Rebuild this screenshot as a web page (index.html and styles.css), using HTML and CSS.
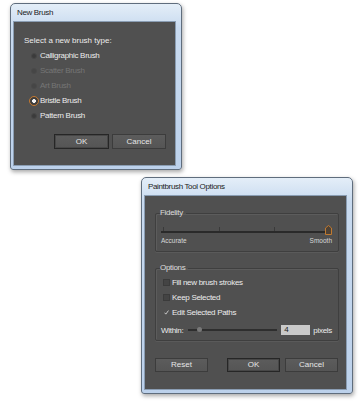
FILE: index.html
```html
<!DOCTYPE html>
<html>
<head>
<meta charset="utf-8">
<link rel="stylesheet" href="styles.css">
</head>
<body>
<div class="page">
  <div class="win win-brush">
    <div class="titlebar">New Brush</div>
    <div class="panel panel-brush">
      <div class="prompt">Select a new brush type:</div>
      <div class="radios">
        <div class="radio"><span class="dot"></span>Calligraphic Brush</div>
        <div class="radio disabled"><span class="dot"></span>Scatter Brush</div>
        <div class="radio disabled"><span class="dot"></span>Art Brush</div>
        <div class="radio"><span class="dot on"></span>Bristle Brush</div>
        <div class="radio"><span class="dot"></span>Pattern Brush</div>
      </div>
      <div class="btnrow">
        <div class="btn default w55">OK</div>
        <div class="btn w54">Cancel</div>
      </div>
    </div>
  </div>

  <div class="win win-opts">
    <div class="titlebar">Paintbrush Tool Options</div>
    <div class="panel panel-opts">
      <fieldset class="group fid">
        <legend>Fidelity</legend>
        <div class="fslider">
          <span class="tick t1"></span>
          <span class="tick t2"></span>
          <span class="tick t3"></span>
          <svg class="fthumb" width="7" height="10" viewBox="0 0 7 10"><path d="M0.5 9.5 V3 L3.5 0.5 L6.5 3 V9.5 Z" fill="#4e4236" stroke="#c07a30" stroke-width="1"/></svg>
        </div>
        <div class="flabels"><span>Accurate</span><span>Smooth</span></div>
      </fieldset>
      <fieldset class="group opts">
        <legend>Options</legend>
        <div class="check"><span class="box"></span>Fill new brush strokes</div>
        <div class="check"><span class="box"></span>Keep Selected</div>
        <div class="check"><span class="box checked"><svg width="7" height="7" viewBox="0 0 7 7"><path d="M0.8 3.8 L2.6 5.8 L6.2 0.8" fill="none" stroke="#e6e6e6" stroke-width="1.1"/></svg></span>Edit Selected Paths</div>
        <div class="within">
          <span class="wlabel">Within:</span>
          <div class="wslider"><span class="wthumb"></span></div>
          <div class="input">4</div>
          <span>pixels</span>
        </div>
      </fieldset>
      <div class="btnrow2">
        <div class="btn w53">Reset</div>
        <div class="right">
          <div class="btn default w53">OK</div>
          <div class="btn w53">Cancel</div>
        </div>
      </div>
    </div>
  </div>
</div>
</body>
</html>
```
FILE: styles.css
```css
* { box-sizing: border-box; }
html, body { margin: 0; padding: 0; background: #ffffff; }
body { width: 360px; height: 402px; overflow: hidden; font-family: "Liberation Sans", Arial, sans-serif; }
.page { display: flex; flex-direction: column; align-items: flex-start; }

.win {
  background: linear-gradient(#e4eef8, #c8daef 24px, #bcd1eb);
  border: 1px solid #5f6d7d;
  border-radius: 5px 5px 3px 3px;
  padding: 0 5px 4px 2px;
  box-shadow: 1px 2px 4px rgba(0,0,0,0.35);
}
.win-brush { margin: 3px 0 0 10px; width: 172px; height: 167px; }
.win-opts { margin: 7px 0 0 141px; width: 212px; height: 217px; }

.titlebar {
  height: 17px;
  line-height: 17px;
  font-size: 8px;
  letter-spacing: -0.35px;
  color: #1c1c1c;
  padding-left: 4px;
}

.panel {
  background: #505050;
  border: 1px solid #8a9db3;
  color: #ececec;
  font-size: 8px;
  letter-spacing: -0.3px;
}
.panel-brush { height: 145px; padding: 13px 9px 0 10px; display: flex; flex-direction: column; }
.prompt { height: 12px; line-height: 12px; letter-spacing: 0; }
.radios { margin-top: 1px; display: flex; flex-direction: column; }
.radio { height: 15px; display: flex; align-items: center; padding-left: 5px; }
.radio.disabled { color: #767676; }
.dot {
  width: 6px; height: 6px; border-radius: 50%;
  background: #3b3b3b; border: 1px solid #484848;
  margin-right: 3px; margin-left: 2px;
}
.radio.disabled .dot { background: #464646; border-color: #4a4a4a; }
.dot.on {
  width: 10px; height: 10px; margin-left: 0; margin-right: 1px;
  background: radial-gradient(circle, #f2f2f2 0 1.6px, #3e3e3e 2.2px);
  border: 1.5px solid #c4782e;
}
.btnrow { margin-top: 11px; display: flex; justify-content: flex-end; gap: 3px; }
.btn {
  height: 15px; line-height: 13px; text-align: center;
  background: linear-gradient(#5c5c5c, #555555);
  border: 1px solid #3c3c3c;
  color: #e6e6e6; font-size: 8px; letter-spacing: 0;
}
.btn.default { border-color: #262626; box-shadow: inset 0 0 0 1px #474747; }
.w55 { width: 55px; } .w54 { width: 54px; } .w53 { width: 53px; }

.panel-opts { height: 195px; padding: 12px 7px 0 10px; display: flex; flex-direction: column; }
.group {
  margin: 0; border: 1px solid #3f3f3f; border-radius: 2px;
  box-shadow: 1px 1px 0 #5c5c5c inset, 0 1px 0 #5a5a5a;
  padding: 0 6px 0 5px; width: 184px; min-width: 0;
}
.group legend { padding: 0 3px 0 0; font-size: 8px; color: #dcdcdc; line-height: 10px; margin-left: -1px; }
.fid { height: 44px; }
.fslider { position: relative; height: 2px; margin-top: 13px; background: #2a2a2a; width: 170px; }
.tick { position: absolute; bottom: 2px; width: 1px; height: 4px; background: #3a3a3a; }
.t1 { left: 2px; } .t2 { left: 58px; } .t3 { left: 113px; }
.fthumb { position: absolute; left: 164px; top: -6px; }
.flabels { display: flex; justify-content: space-between; width: 171px; font-size: 6.5px; letter-spacing: 0; color: #d8d8d8; margin-top: 4px; }
.opts { margin-top: 11px; height: 78px; padding-top: 2px; }
.check { height: 15px; display: flex; align-items: center; }
.box {
  width: 7px; height: 7px; background: #444; border: 1px solid #3b3b3b; margin: 0 2px 0 2px;
  display: flex; justify-content: center; align-items: center;
}
.box.checked { background: transparent; border-color: transparent; }
.within { display: flex; align-items: center; height: 16px; margin-top: 2px; }
.wslider { position: relative; width: 89px; height: 2px; background: #2e2e2e; margin: 0 4px 0 5px; }
.wthumb { position: absolute; left: 9px; top: -2px; width: 5px; height: 5px; border-radius: 50%; background: #787878; }
.input { width: 29px; height: 10px; background: #c9c9c9; color: #222; line-height: 10px; padding-left: 3px; margin-right: 3px; }

.btnrow2 { margin-top: 17px; display: flex; justify-content: space-between; width: 183px; }
.btnrow2 .right { display: flex; gap: 5px; }
.btnrow2 .btn { height: 14px; line-height: 12px; }
```
